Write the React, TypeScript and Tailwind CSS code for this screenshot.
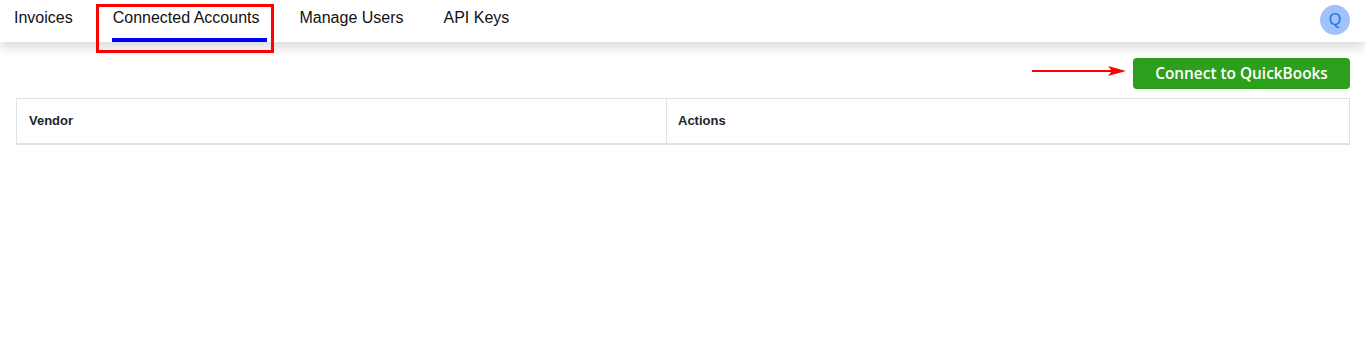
import React from "react";

export default function App() {
  const tabs = ["Invoices", "Connected Accounts", "Manage Users", "API Keys"];
  return (
    <div className="relative w-[1365px] h-[355px] bg-white overflow-hidden" style={{ fontFamily: '"Liberation Sans", Arial, sans-serif' }}>
      {/* Nav */}
      <div className="relative z-10 h-[42px] bg-white flex items-start pl-[14px] pr-[15px] shadow-[0_4px_14px_rgba(0,0,0,0.18)]">
        <div className="flex gap-[40px] pt-[8px]">
          {tabs.map((t) => (
            <div key={t} className="relative text-[16px] leading-[19px] text-[#111]">
              {t}
              {t === "Connected Accounts" && (
                <div className="absolute left-[-1px] top-[30px] w-[155px] h-[4px] bg-[#0000ff]" />
              )}
            </div>
          ))}
        </div>
        <div className="ml-auto mt-[5px] w-[30px] h-[30px] rounded-full bg-[#a1c2fa] flex items-center justify-center text-[16px] text-[#1a73e8]">
          Q
        </div>
      </div>

      {/* Content */}
      <div className="pr-[15px] pl-[16px] pt-[16px]">
        <div className="flex justify-end">
          <button
            className="w-[217px] h-[31px] rounded-[4px] bg-[#2ca01c] text-white text-[15.4px] font-semibold"
            style={{ fontFamily: '"Open Sans", Lato, sans-serif' }}
          >
            Connect to QuickBooks
          </button>
        </div>
        <div className="mt-[9px] border border-[#dee2e6] border-b-2 flex text-[13px] font-bold text-[#212529]">
          <div className="w-[650px] px-[12px] py-[13px] leading-[18px] border-r border-[#dee2e6]">Vendor</div>
          <div className="flex-1 px-[11px] py-[13px] leading-[18px]">Actions</div>
        </div>
      </div>

      {/* Annotations */}
      <div className="absolute z-20 left-[96px] top-[4px] w-[178px] h-[49px] border-[3px] border-[#ff0000]" />
      <div className="absolute z-20 left-[1032px] top-[70px] w-[80px] h-[2px] bg-[#ff0000]" />
      <svg className="absolute z-20 left-[1108px] top-[66px]" width="18" height="10" viewBox="0 0 18 10">
        <polygon points="0,0 18,5 0,10 4,5" fill="#ff0000" />
      </svg>
    </div>
  );
}
